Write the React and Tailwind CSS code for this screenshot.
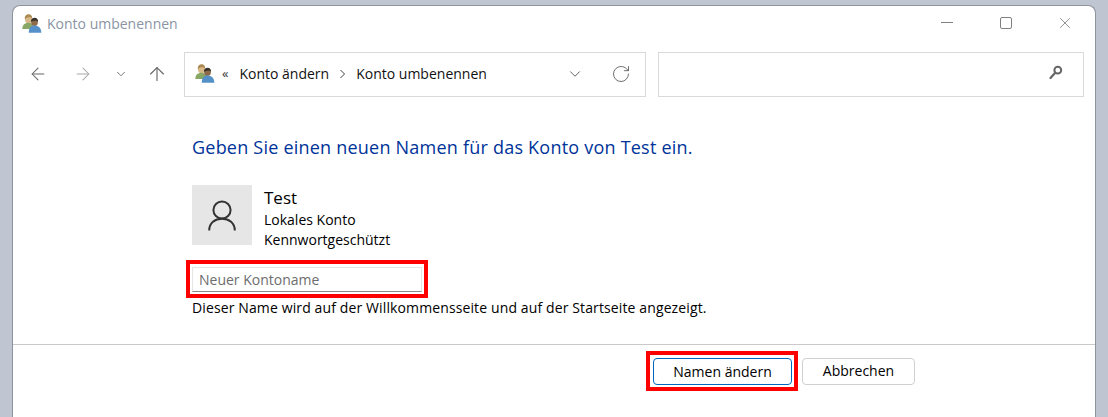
import React from "react";
import { ArrowLeft, ArrowRight, ArrowUp, ChevronDown, RotateCw, X } from "lucide-react";

function UsersIcon() {
  return (
    <svg width="20" height="19" viewBox="0 0 20 19">
      <ellipse cx="6.5" cy="5" rx="3.6" ry="4.3" fill="#d9b98a" />
      <path d="M2.8 5C2.6 1.5 5 0.3 6.8 0.3S10.4 2 10.2 4.5L8 3 5 3.5z" fill="#a8894f" />
      <path d="M0.3 15c0-4 2.5-6.2 6.2-6.2s5 2.2 5 6.2z" fill="#8aa865" />
      <ellipse cx="12.5" cy="8" rx="3.4" ry="4" fill="#8f6a48" />
      <path d="M8.9 7.8C8.8 5 11 3.8 12.8 3.8S16.2 5.5 16.1 7.8l-2-1.2-3 .4z" fill="#35322e" />
      <path d="M6.8 18.7c0-4.7 2-7.2 5.7-7.2s6.8 2.5 6.8 7.2z" fill="#5590c8" />
    </svg>
  );
}

function Crumb() {
  return (
    <svg width="7" height="10" viewBox="0 0 7 10" className="mx-[10px]">
      <path d="M1.5 1l4 4-4 4" fill="none" stroke="#444444" strokeWidth="1" />
    </svg>
  );
}

function SearchGlyph() {
  return (
    <svg width="14" height="15" viewBox="0 0 14 15">
      <circle cx="8.8" cy="5.2" r="3.4" fill="none" stroke="#666666" strokeWidth="2" />
      <path d="M6 8L1.5 13" fill="none" stroke="#666666" strokeWidth="2.2" strokeLinecap="round" />
    </svg>
  );
}

function PersonGlyph() {
  return (
    <svg width="28" height="31" viewBox="0 0 28 31">
      <circle cx="14" cy="10" r="8.6" fill="none" stroke="#333333" strokeWidth="2" />
      <path d="M1.2 30.5C1.2 23 7 18.8 14 18.8S26.8 23 26.8 30.5" fill="none" stroke="#333333" strokeWidth="2" />
    </svg>
  );
}

function App() {
  return (
    <div className="h-[417px] w-[1108px] overflow-hidden bg-[#bfc5d1] pl-3 pt-[5px] pr-3 font-['Open_Sans',sans-serif]">
      <div className="h-[420px] w-[1084px] rounded-t-[8px] border-t border-l border-r border-[#8f939b] bg-white">
        <div className="flex h-[35px] items-center pl-[9px]">
          <UsersIcon />
          <span className="ml-[5px] text-[14px] text-[#8a94a4]">Konto umbenennen</span>
          <div className="-mt-[2px] ml-auto flex items-center text-[#6f6f6f]">
            <div className="mr-[47px] h-px w-[12px] bg-[#808080]" />
            <div className="mr-[44px] h-[12px] w-[12px] rounded-[2px] border border-[#808080]" />
            <X size={18} strokeWidth={1} className="mr-[21px]" />
          </div>
        </div>

        <div className="mt-[11px] flex h-[45px] items-center">
          <div className="flex w-[171px] items-center pb-[2px] pl-[15px] text-[#666666]">
            <ArrowLeft size={20} strokeWidth={1.25} />
            <ArrowRight size={20} strokeWidth={1.25} className="ml-[25px] text-[#a8a8a8]" />
            <ChevronDown size={14} strokeWidth={1.5} className="ml-[21px]" />
            <ArrowUp size={22} strokeWidth={1.25} className="ml-[18px]" />
          </div>
          <div className="flex h-[45px] w-[462px] items-center border border-[#d9d9d9] pb-[2px] pl-[10px]">
            <UsersIcon />
            <span className="ml-[7px] text-[13px] leading-none text-[#333333]">«</span>
            <span className="ml-[11px] text-[14px] text-[#111111]">Konto ändern</span>
            <Crumb />
            <span className="text-[14px] text-[#111111]">Konto umbenennen</span>
            <ChevronDown size={18} strokeWidth={1.25} className="ml-auto text-[#555555]" />
            <RotateCw size={20} strokeWidth={1} className="ml-[27px] mr-[14px] text-[#555555]" />
          </div>
          <div className="ml-3 flex h-[45px] w-[426px] items-center justify-end border border-[#d9d9d9] pr-[20px] pb-[4px]">
            <SearchGlyph />
          </div>
        </div>

        <div className="pl-[179px]">
          <h1 className="mt-[37px] text-[18px] leading-[26px] font-normal tracking-[0.22px] text-[#003399]">
            Geben Sie einen neuen Namen für das Konto von Test ein.
          </h1>

          <div className="mt-[25px] flex">
            <div className="flex h-[60px] w-[60px] items-center justify-center bg-[#e6e6e6]">
              <PersonGlyph />
            </div>
            <div className="ml-[12px] flex flex-col text-black">
              <span className="text-[17px] leading-[25px]">Test</span>
              <span className="text-[14px] leading-[20px]">Lokales Konto</span>
              <span className="text-[14px] leading-[20px]">Kennwortgeschützt</span>
            </div>
          </div>

          <div className="mt-[10px] -ml-[6px] h-[38px] w-[242px] border-[4px] border-[#ff0000] px-[2px] pt-[3px] pb-[2px]">
            <div className="flex h-[25px] items-center border border-[#e5e5e5] border-b-[#8a8a8a] pl-[6px] text-[14px] text-[#6d6d6d]">
              Neuer Kontoname
            </div>
          </div>

          <p className="text-[14px] leading-[20px] tracking-[0.12px] text-black">
            Dieser Name wird auf der Willkommensseite und auf der Startseite angezeigt.
          </p>
        </div>

        <div className="mt-[26px] border-t border-[#c9c9c9]" />

        <div className="mt-[6px] flex items-center pl-[633px]">
          <div className="h-[40px] w-[152px] border-[4px] border-[#ff0000] pt-[3px] pl-[3px]">
            <button className="h-[27px] w-[139px] rounded-[4px] border border-[#0067c0] text-[14px] leading-none text-black">
              Namen ändern
            </button>
          </div>
          <button className="ml-[4px] h-[27px] w-[113px] rounded-[4px] border border-[#d0d0d0] text-[14px] leading-none text-black">
            Abbrechen
          </button>
        </div>
      </div>
    </div>
  );
}

export default App;
